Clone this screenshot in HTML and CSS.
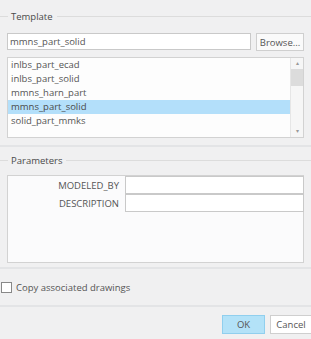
FILE: index.html
```html
<!DOCTYPE html>
<html lang="en">
<head>
  <meta charset="UTF-8">
  <title>New Part</title>
  <link rel="stylesheet" href="styles.css">
</head>
<body>
  <div class="dialog">
    <div class="group">
      <div class="group-title"><span>Template</span></div>
      <div class="template-row">
        <input class="field" type="text" value="mmns_part_solid">
        <button class="btn">Browse...</button>
      </div>
      <div class="listbox">
        <ul class="items">
          <li>inlbs_part_ecad</li>
          <li>inlbs_part_solid</li>
          <li>mmns_harn_part</li>
          <li class="selected">mmns_part_solid</li>
          <li>solid_part_mmks</li>
        </ul>
        <div class="scrollbar">
          <div class="arrow">&#9652;</div>
          <div class="track"><div class="thumb"></div></div>
          <div class="arrow">&#9662;</div>
        </div>
      </div>
    </div>

    <div class="group second">
      <div class="group-title"><span>Parameters</span></div>
      <div class="params">
        <div class="param-row">
          <label>MODELED_BY</label>
          <input class="param-input" type="text">
        </div>
        <div class="param-row">
          <label>DESCRIPTION</label>
          <input class="param-input" type="text">
        </div>
      </div>
    </div>

    <label class="check">
      <span class="box"></span>
      Copy associated drawings
    </label>

    <div class="footer">
      <button class="btn ok">OK</button>
      <button class="btn cancel">Cancel</button>
    </div>
  </div>
</body>
</html>
```

FILE: styles.css
```css
body {
  margin: 0;
  background: #f0f0f1;
  font-family: 'Open Sans', sans-serif;
  font-size: 9.5px;
  color: #555;
}

.dialog {
  width: 311px;
  height: 339px;
  overflow: hidden;
}

.group {
  padding: 0 7px;
  border-bottom: 2px solid #e3e4e6;
}

.group-title {
  display: flex;
  align-items: center;
  margin: 0 -7px;
  height: 16px;
  padding-top: 8px;
}

.second .group-title {
  padding-top: 5px;
}

.group-title::before {
  content: "";
  width: 8px;
  border-top: 1px solid #dcdcdc;
}

.group-title::after {
  content: "";
  flex: 1;
  border-top: 1px solid #dcdcdc;
  margin-left: 4px;
}

.group-title span {
  padding-left: 3px;
  color: #4a4a4a;
}

.template-row {
  display: flex;
  gap: 5px;
  margin-top: 9px;
}

.field {
  width: 244px;
  height: 17px;
  box-sizing: border-box;
  border: 1px solid #c9c9c9;
  background: #fff;
  font: inherit;
  color: #555;
  padding: 0 2px;
  margin: 0;
}

.btn {
  font: inherit;
  color: #555;
  background: #fafafa;
  border: 1px solid #cfcfcf;
  padding: 0;
  margin: 0;
  height: 18px;
  width: 48px;
}

.listbox {
  display: flex;
  margin-top: 6px;
  height: 79px;
  border: 1px solid #d2d2d2;
  background: #fdfdfd;
  margin-bottom: 7px;
}

.items {
  list-style: none;
  margin: 0;
  padding: 0;
  flex: 1;
}

.items li {
  height: 14px;
  line-height: 14px;
  padding-left: 3px;
}

.items li.selected {
  background: #b3dffa;
  color: #4a4a4a;
}

.scrollbar {
  width: 12px;
  display: flex;
  flex-direction: column;
  border-left: 1px solid #e6e6e6;
  background: #f6f6f6;
}

.arrow {
  height: 11px;
  font-size: 6px;
  line-height: 11px;
  text-align: center;
  color: #999;
}

.track {
  flex: 1;
}

.thumb {
  height: 17px;
  background: #dcdcdc;
}

.params {
  margin-top: 7px;
  height: 86px;
  border: 1px solid #d2d2d2;
  background: #fbfbfc;
  margin-bottom: 4px;
}

.param-row {
  display: flex;
  align-items: center;
}

.param-row label {
  flex-shrink: 0;
  width: 111px;
  text-align: right;
  padding-right: 3px;
  margin-right: 3px;
  color: #555;
}

.param-input {
  flex: 1;
  min-width: 0;
  height: 18px;
  box-sizing: border-box;
  border: 1px solid #c9c9c9;
  background: #fff;
  margin: 0;
  margin-right: -1px;
}

.check {
  display: flex;
  align-items: center;
  gap: 4px;
  height: 36px;
  border-bottom: 2px solid #e3e4e6;
  padding-left: 1px;
}

.box {
  width: 9px;
  height: 9px;
  border: 1px solid #888;
  background: #fff;
}

.footer {
  display: flex;
  justify-content: flex-end;
  gap: 5px;
  padding-top: 8px;
}

.ok {
  width: 43px;
  height: 19px;
  background: #b3e2f8;
  border-color: #90cfee;
}

.cancel {
  width: 42px;
  height: 19px;
  background: #fff;
  margin-right: -1px;
}
```
